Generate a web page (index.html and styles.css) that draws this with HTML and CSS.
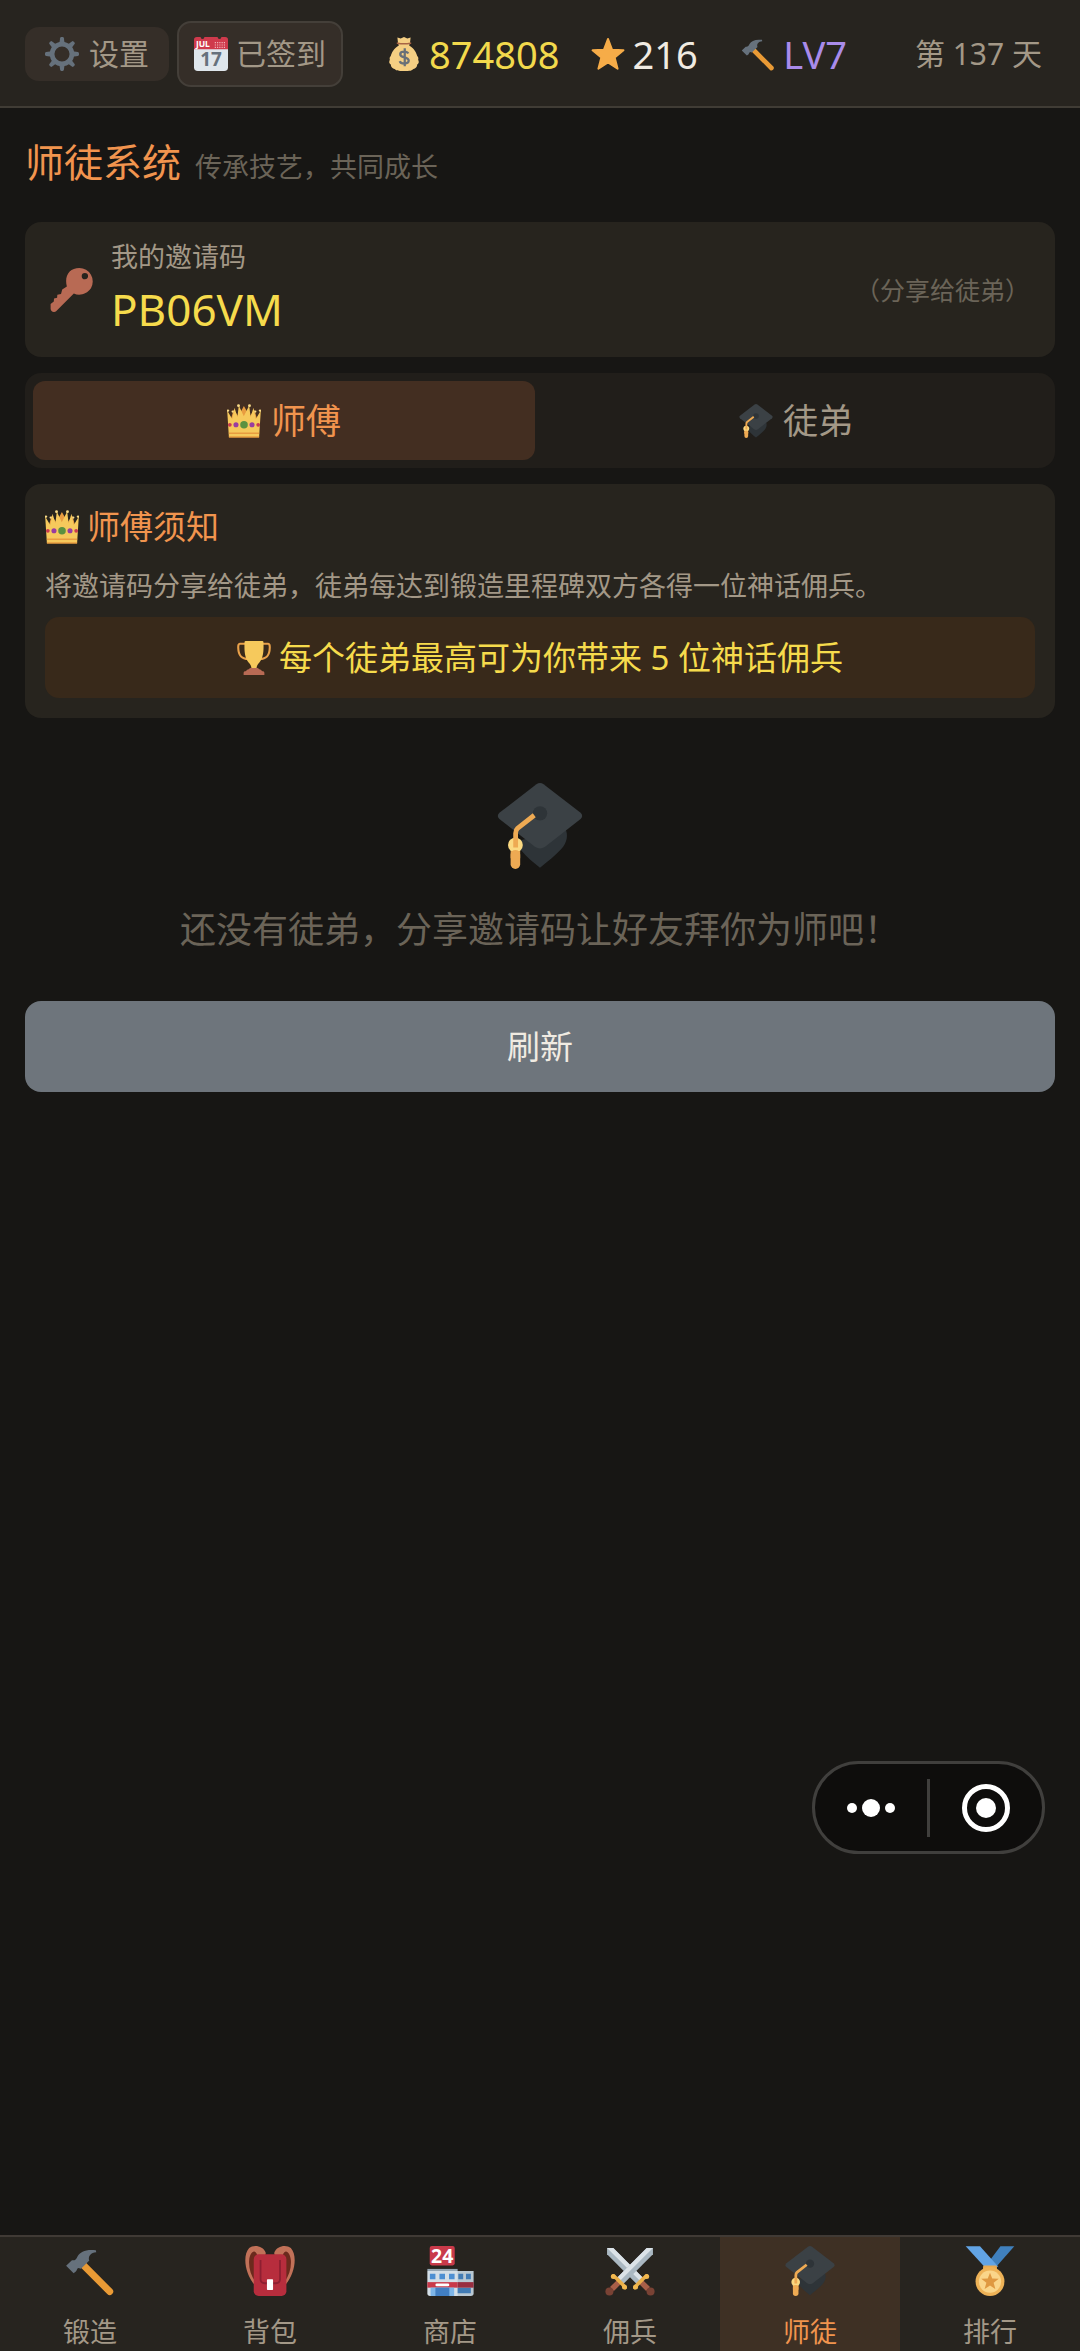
FILE: index.html
```html
<!DOCTYPE html>
<html lang="zh-CN">
<head>
<meta charset="utf-8">
<meta name="viewport" content="width=device-width, initial-scale=1">
<title>师徒系统</title>
<link rel="stylesheet" href="styles.css">
</head>
<body>
<svg class="sprite" aria-hidden="true">
  <symbol id="gear" viewBox="0 0 36 36">
    <g fill="#66717c">
      <path id="tooth" d="M15.2 7 16 1.2Q16.200 0 17.200 0h1.600q1 0 1.200 1.200L20.800 7z"/>
      <use href="#tooth" transform="rotate(45 18 18)"/><use href="#tooth" transform="rotate(90 18 18)"/>
      <use href="#tooth" transform="rotate(135 18 18)"/><use href="#tooth" transform="rotate(180 18 18)"/>
      <use href="#tooth" transform="rotate(225 18 18)"/><use href="#tooth" transform="rotate(270 18 18)"/>
      <use href="#tooth" transform="rotate(315 18 18)"/>
    </g>
    <circle cx="18" cy="18" r="10.500" fill="none" stroke="#66717c" stroke-width="5"/>
  </symbol>
  <symbol id="money" viewBox="0 0 36 36">
    <path fill="#f5cf83" d="M11.500 5 11 .5l3.500 1L18 0l3.500 1.500 3.500-1-.5 4.500c0 2-1 3-1 4C29 12 31 17 32 20c1 1 1.500 2 1 4 1 2 1 4-1 5 0 3-2 4-4 5-2 2-4 2-6 2h-8c-2 0-4 0-6-2-2-1-4-2-4-5-2-1-2-3-1-5-.5-2 0-3 1-4 1-3 3-8 8.500-11 0-1-1-2-1-4z"/>
    <path fill="none" stroke="#a86545" stroke-width="1.600" stroke-linecap="round" d="M11 6.500q7 1.500 14 0"/>
    <path fill="none" stroke="#697078" stroke-width="2.400" d="M22.500 17.500c-1-2.500-8-3-8.500.5-.4 4.500 9 2.500 9 7 0 4-8.500 4-9.500.5M18.800 12v19"/>
  </symbol>
  <symbol id="star" viewBox="0 0 36 36">
    <path fill="#f6ac48" stroke="#f6ac48" stroke-width="2" stroke-linejoin="round" d="M18 2l4.400 11.500 12 .6-9.300 7.600 3.100 12L18 27 7.800 33.700l3.100-12L1.600 14.100l12-.6z"/>
  </symbol>
  <symbol id="hammer" viewBox="0 0 36 36">
    <path stroke="#e99a35" stroke-width="5" stroke-linecap="round" d="M13 13.500 32.200 32.800"/>
    <path fill="#66717c" d="M.8 14.200 5 10.200c2 .4 3-.5 4-2.700C11 4 15 2.200 22.200 3l.3 1.500c-4 .4-5.500 2.500-5.300 5.200l.3.800L11.500 16.300l-1.800-.5C8.500 16 8.500 18 7.800 18.400l-1.600 1.200z"/>
  </symbol>
  <symbol id="key" viewBox="0 0 36 36">
    <path fill="#b86a54" fill-rule="evenodd" d="M24 0a11 11 0 0 1 9.500 16.500C30 21.500 24 23 19.500 20.800L5 35.300c-1.500 1.500-4.500.5-4.500-2v-3.800l2.600-2 .2-2.500 2.500-.6.2-2.600 3-.5 1-3.800 3.800-2.300C11.500 6 16 .2 24 0zm4.500 4a2.600 2.600 0 1 0 .1 5.200A2.600 2.600 0 0 0 28.500 4z"/>
  </symbol>
  <symbol id="crown" viewBox="0 0 36 36">
    <path fill="#e89c40" d="M3 20 7 6l5 7 5.900-11 6.100 11 5-7 4 14z"/>
    <path fill="#f6c95c" d="M2 35 .2 7l5.300 9L8 4l3 10L12.500 1.500 17.800 13l5.700-11.500L25 14l3-10 2.500 12 5.300-9L34 35z"/>
    <path stroke="#e89c40" stroke-width="1.600" d="M2 31h32M2 35h32"/>
    <g fill="#fadc88"><circle cx="1" cy="7" r="1.300"/><circle cx="12.200" cy="1.800" r="1.500"/><circle cx="23.800" cy="1.800" r="1.500"/><circle cx="35" cy="7" r="1.300"/><circle cx="6" cy="8" r="1.200"/><circle cx="30" cy="8" r="1.200"/></g>
    <circle cx="18" cy="22" r="4" fill="#5c9140"/>
    <circle cx="9.500" cy="22" r="2.700" fill="#983ca0"/><circle cx="26.500" cy="22" r="2.700" fill="#983ca0"/>
    <circle cx="3" cy="22" r="2" fill="#c93a50"/><circle cx="33" cy="22" r="2" fill="#c93a50"/>
  </symbol>
  <symbol id="cap" viewBox="0 0 36 36">
    <path fill="#2e3438" d="M10 24 28.500 19c1.500 2.500.8 6-1.500 8.500-2.500 2.800-5.500 5-9 8-3-2.500-5.500-4.500-8-7.500z"/>
    <path fill="#3b4145" d="M16.500.5q1.500-1 3 0L35 12.500q1.300 1.300 0 2.600L20 26.800q-2 1.200-4 0L1 15.100q-1.300-1.300 0-2.600z"/>
    <circle cx="18" cy="12.700" r="3" fill="#2e3438"/>
    <circle cx="7.700" cy="26" r="3.100" fill="#fbd981"/>
    <path fill="none" stroke="#eeaa53" stroke-width="2" d="M15.600 13.500 8.600 19Q7.800 19.700 7.800 21V27"/>
    <path stroke="#eeaa53" stroke-width="4" stroke-linecap="round" d="M7.700 30v4"/><path stroke="#eeaa53" stroke-width="4" d="M7.700 28.500v3"/>
  </symbol>
  <symbol id="trophy" viewBox="0 0 36 36">
    <path fill="none" stroke="#e9a14a" stroke-width="2.200" d="M9 3H3Q1.200 3 1.300 7c.2 8 3 12 10.700 12M27 3h6q1.800 0 1.700 4c-.2 8-3 12-10.700 12"/>
    <path fill="#f6c95c" d="M8 1q0-1 1.200-1h17.600Q28 0 28 1c.5 11-.5 17-4.500 22-2 2-3 4-2.800 7h-5.400c.2-3-.8-5-2.800-7C8.500 18 7.500 12 8 1z"/>
    <path fill="#b86a54" d="M7 36v-2.500q0-1.500 2-1.500c1 0 1.500-2 3.500-2 .5-1.200 1.500-1.500 2.500-1.500h6c1 0 2 .3 2.500 1.500 2 0 2.500 2 3.500 2q2 0 2 1.500V36z"/>
  </symbol>
  <symbol id="backpack" viewBox="0 0 36 36">
    <path fill="#6b2a1d" d="M2 9C3 2 8 1 12 5l-3 25C4 26 0 17 2 9zM34 9C33 2 28 1 24 5l3 25c5-4 9-13 7-21z"/>
    <path fill="#c17158" d="M7 28C0 20-2 7 3 1.500 6-1 13-.5 15 5l-.5 2H9C7 1 3.500 5 3 10s1 11 4.500 16zM29 28c7-8 9-21 4-26.500C30-1 23-.5 21 5l.5 2H27c2-6 5.500-2 6 3s-1 11-4.500 16z"/>
    <rect x="6.300" y="6" width="23.500" height="30" rx="3.500" fill="#b72d3d"/>
    <path fill="none" stroke="#8e1f31" stroke-width="1.300" d="M11.200 10v14q0 2.800 3 2.800h8q3 0 3-2.800V10"/>
    <rect x="15.800" y="24" width="4.400" height="7.600" rx=".5" fill="#fff"/>
  </symbol>
  <symbol id="swords" viewBox="0 0 36 36">
    <g id="sword">
      <path fill="#aab8c2" d="M1.500 6V1.500H6L27.500 23 23 27.500z"/>
      <path fill="#dce3e8" d="M1.500 1.500H6L27.500 23l-2.200 2.200z"/>
      <path stroke="#a85f48" stroke-width="4" d="m26 26 5 5"/>
      <path fill="none" stroke="#e9ae49" stroke-width="2.600" stroke-linecap="round" d="m21.500 30 2-2.500 4-4 2.500-2"/>
      <circle cx="22" cy="29.500" r="1.800" fill="#f2b84f"/><circle cx="30" cy="22" r="1.800" fill="#f2b84f"/>
      <circle cx="32.800" cy="32.800" r="2.900" fill="#794234"/>
    </g>
    <use href="#sword" transform="translate(36 0) scale(-1 1)"/>
  </symbol>
  <symbol id="medal" viewBox="0 0 36 36">
    <path fill="#4080bd" d="M25.500.2h10L22.500 15h-8z"/>
    <path fill="#62a4e5" d="M.5.2h10.300L24 15h-10z"/>
    <rect x="13" y="14" width="10" height="4" rx="1" fill="#e9aa50"/>
    <circle cx="18" cy="25.600" r="10.400" fill="#eeb257"/><circle cx="18" cy="25.600" r="8" fill="#fad58a"/>
    <path fill="#df9841" d="m18 19.200 1.600 4.200 4.700.2-3.700 2.900 1.300 4.500-3.900-2.500-3.900 2.500 1.300-4.500-3.700-2.900 4.700-.2z"/>
  </symbol>
</svg>

<header class="topbar">
  <div class="actions">
    <button class="chip" type="button"><svg class="icon"><use href="#gear"/></svg>设置</button>
    <button class="chip chip-outlined" type="button">
      <svg class="icon" viewBox="0 0 36 36">
        <path fill="#dfe6ec" d="M0 10h36v22a4 4 0 0 1-4 4H4a4 4 0 0 1-4-4z"/>
        <path fill="#cf3a4c" d="M0 13V3a3 3 0 0 1 3-3h4a2 2 0 0 0 4 0h14a2 2 0 0 0 4 0h4a3 3 0 0 1 3 3v10z"/>
        <path fill="none" stroke="#f3b8bf" stroke-width="1.200" stroke-dasharray="1.200 1.200" d="M22 6h12M22 8.500h12M22 11h12"/>
        <text x="2" y="11" class="cal-month">JUL</text>
        <text x="18" y="31" text-anchor="middle" class="cal-day">17</text>
      </svg>已签到</button>
  </div>
  <div class="stats">
    <div class="stat stat-gold"><svg class="icon icon-tall"><use href="#money"/></svg>874808</div>
    <div class="stat"><svg class="icon"><use href="#star"/></svg>216</div>
    <div class="stat stat-level"><svg class="icon"><use href="#hammer"/></svg>LV7</div>
  </div>
  <div class="day">第 137 天</div>
</header>

<main class="content">
  <div class="page-head">
    <h1>师徒系统</h1>
    <p>传承技艺，共同成长</p>
  </div>

  <section class="card invite">
    <svg class="icon-key"><use href="#key"/></svg>
    <div class="invite-body">
      <div class="invite-label">我的邀请码</div>
      <div class="invite-code">PB06VM</div>
    </div>
    <div class="invite-hint">（分享给徒弟）</div>
  </section>

  <div class="tabs" role="tablist">
    <button class="tab tab-active" type="button" role="tab" aria-selected="true"><svg class="icon"><use href="#crown"/></svg>师傅</button>
    <button class="tab" type="button" role="tab" aria-selected="false"><svg class="icon"><use href="#cap"/></svg>徒弟</button>
  </div>

  <section class="card notice">
    <h2><svg class="icon"><use href="#crown"/></svg>师傅须知</h2>
    <p>将邀请码分享给徒弟，徒弟每达到锻造里程碑双方各得一位神话佣兵。</p>
    <div class="reward"><svg class="icon"><use href="#trophy"/></svg>每个徒弟最高可为你带来 5 位神话佣兵</div>
  </section>

  <section class="empty">
    <svg class="icon-empty"><use href="#cap"/></svg>
    <p>还没有徒弟，分享邀请码让好友拜你为师吧！</p>
  </section>

  <button class="refresh" type="button">刷新</button>
</main>

<div class="capsule">
  <button type="button" aria-label="更多">
    <svg width="52" height="52" viewBox="0 0 52 52" fill="#fff"><circle cx="7" cy="26" r="5"/><circle cx="26" cy="26" r="9"/><circle cx="45" cy="26" r="5"/></svg>
  </button>
  <button type="button" aria-label="关闭">
    <svg width="52" height="52" viewBox="0 0 52 52"><circle cx="26" cy="26" r="21.500" fill="none" stroke="#fff" stroke-width="5"/><circle cx="26" cy="26" r="10" fill="#fff"/></svg>
  </button>
</div>

<nav class="tabbar">
  <a href="#forge"><svg><use href="#hammer"/></svg>锻造</a>
  <a href="#bag"><svg><use href="#backpack"/></svg>背包</a>
  <a href="#shop">
    <svg viewBox="0 0 36 36">
      <rect x="3.400" width="18" height="14" rx="1.500" fill="#c93a4a"/>
      <text x="12.400" y="12" text-anchor="middle" class="store-sign">24</text>
      <path fill="#b9c8d2" d="M23 18h12v16a2 2 0 0 1-2 2H23z"/>
      <path fill="#d4dfe7" d="M1.700 18h21.800v18H3.700a2 2 0 0 1-2-2z"/>
      <path fill="#96a7b4" d="M1.700 16.500h21.800V18H1.700z"/>
      <path fill="#4d8fd2" d="M3.500 20h4v4h-4zM10.400 20h4v4h-4zM17.300 20h4v4h-4z"/>
      <path fill="#417bb4" d="M24 20h3.500v4H24zM29.500 20H33v4h-3.500zM23.500 30H33v4h-9.500z"/>
      <path fill="#c93a4a" d="M1.700 26h21.800v4H1.700z"/><path fill="#992e40" d="M23.500 26H35v4H23.500z"/>
      <path fill="#7eb6e8" d="M4 30h17v6H4z"/><path fill="#417fc3" d="M7.500 30h10v6h-10z"/>
      <rect x="7.500" y="27" width="10" height="2" rx="1" fill="#fff"/>
    </svg>商店</a>
  <a href="#mercenary"><svg><use href="#swords"/></svg>佣兵</a>
  <a href="#mentor" class="current" aria-current="page"><svg><use href="#cap"/></svg>师徒</a>
  <a href="#rank"><svg><use href="#medal"/></svg>排行</a>
</nav>
</body>
</html>
```

FILE: styles.css
```css
* { box-sizing: border-box; }

body {
  margin: 0;
  min-height: 100vh;
  display: flex;
  flex-direction: column;
  background: #171614;
  color: #a39887;
  font-family: "Noto Sans", "Noto Sans CJK SC", sans-serif;
  font-size: 27px;
  line-height: 40px;
}

h1, h2, p { margin: 0; font-weight: 400; }

button {
  margin: 0;
  border: 0;
  color: inherit;
  font: inherit;
}

.sprite { position: absolute; width: 0; height: 0; }
.icon { width: 34px; height: 34px; flex: none; }
.icon-tall { height: 38px; }
.cal-month { font: 700 9px "Noto Sans", sans-serif; fill: #fff; }
.cal-day { font: 700 20px "Noto Sans", sans-serif; fill: #66717c; }
.store-sign { font: 700 14px "Noto Sans", sans-serif; fill: #fff; }

/* Top bar */
.topbar {
  display: flex;
  align-items: center;
  height: 108px;
  padding: 2px 38px 0 25px;
  background: #27241f;
  border-bottom: 2px solid #403c35;
}
.actions { display: flex; align-items: center; gap: 8px; }
.chip {
  display: flex;
  align-items: center;
  justify-content: center;
  gap: 10px;
  height: 54px;
  padding: 0 20px;
  border-radius: 14px;
  background: #352e28;
  font-size: 30px;
}
.chip-outlined {
  height: 66px;
  padding: 0 15px;
  gap: 8px;
  border: 2px solid #443f39;
}
.stats {
  flex: 1;
  display: grid;
  grid-template-columns: 204fr 151fr 174fr;
  padding-left: 44px;
}
.stat {
  display: flex;
  align-items: center;
  gap: 8px;
  color: #f0ebe2;
  font-size: 38px;
  line-height: 48px;
}
.stat-gold { color: #f2d94c; }
.stat-level { color: #a98bea; }
.day { font-size: 30px; }

/* Page content */
.content {
  display: flex;
  flex-direction: column;
  padding: 26px 25px;
}
.page-head {
  display: flex;
  align-items: baseline;
  gap: 14px;
  margin-bottom: 27px;
  color: #6b6458;
  line-height: 56px;
}
.page-head h1 { color: #f1944e; font-size: 39px; }

.card { border-radius: 16px; background: #27241e; }

.invite {
  display: flex;
  align-items: center;
  padding: 15px 25px;
  margin-bottom: 16px;
}
.icon-key { width: 44px; height: 44px; margin-right: 17px; }
.invite-body { flex: 1; }
.invite-code { color: #f6db4c; font-size: 44px; line-height: 65px; }
.invite-hint { color: #6b6458; font-size: 25px; }

.tabs {
  display: grid;
  grid-template-columns: 1fr 1fr;
  gap: 10px;
  padding: 8px;
  margin-bottom: 16px;
  border-radius: 16px;
  background: #211e1a;
}
.tab {
  display: flex;
  align-items: center;
  justify-content: center;
  gap: 10px;
  height: 79px;
  border-radius: 12px;
  background: transparent;
  font-size: 35px;
}
.tab-active { background: #432e21; color: #f1944e; }

.notice { padding: 20px; }
.notice h2 {
  display: flex;
  align-items: center;
  gap: 8px;
  margin-bottom: 16px;
  color: #f1944e;
  font-size: 33px;
  line-height: 46px;
}
.reward {
  display: flex;
  align-items: center;
  justify-content: center;
  gap: 8px;
  margin-top: 11px;
  height: 81px;
  border-radius: 14px;
  background: #38291a;
  color: #f6db4c;
  font-size: 33px;
}

.empty {
  display: flex;
  flex-direction: column;
  align-items: center;
  gap: 34px;
  padding: 65px 0 44px;
  color: #6b6458;
  font-size: 36px;
  line-height: 54px;
}
.icon-empty { width: 86px; height: 86px; }

.refresh {
  height: 91px;
  border-radius: 16px;
  background: #6e757c;
  color: #f0ebe2;
  font-size: 33px;
}

/* Floating host-app controls */
.capsule {
  position: fixed;
  right: 35px;
  bottom: 497px;
  display: flex;
  align-items: center;
  width: 233px;
  height: 93px;
  border: 3px solid #403f3d;
  border-radius: 47px;
  background: #0e0d0c;
}
.capsule button {
  flex: 1;
  display: flex;
  align-items: center;
  justify-content: center;
  height: 58px;
  padding: 0;
  background: transparent;
}
.capsule button + button { border-left: 3px solid #403f3d; }

/* Bottom navigation */
.tabbar {
  display: grid;
  grid-template-columns: repeat(6, 1fr);
  margin-top: auto;
  border-top: 2px solid #403a35;
  background: #27241f;
}
.tabbar a {
  display: flex;
  flex-direction: column;
  align-items: center;
  gap: 16px;
  height: 114px;
  padding-top: 9px;
  color: inherit;
  text-decoration: none;
}
.tabbar svg { width: 50px; height: 50px; flex: none; }
.tabbar .current { background: #3e3024; color: #f1944e; }
```
